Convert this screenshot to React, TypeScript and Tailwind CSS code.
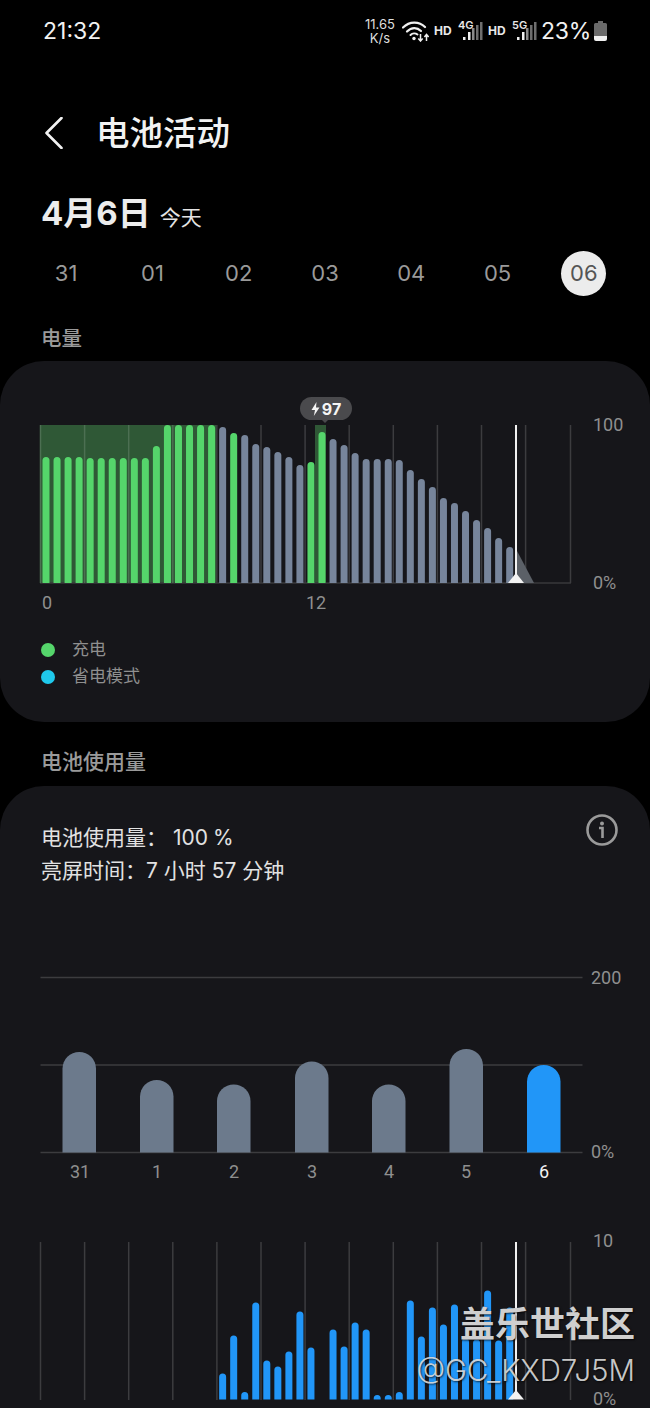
const BASE = 583;
const FIRST_X = 46;
const PITCH = 11.04;
const GRID_X = [40.5, 84.6, 128.7, 172.8, 216.9, 261, 305.1, 349.2, 393.3, 437.4, 481.5, 525.6, 570.5];

const level = [
  126, 126, 126, 126, 125, 125, 125, 125, 125, 125, 137, 158, 158, 158, 158, 158, 156, 150, 148, 139, 136, 131, 126,
  118, 121, 151, 144, 138, 130, 124, 124, 124, 123, 113, 104, 96, 85, 80, 72, 63, 55, 45, 36,
];
// which of the level bars were on charge
const charging = new Set([0, 1, 2, 3, 4, 5, 6, 7, 8, 9, 10, 11, 12, 13, 14, 15, 17, 24, 25]);

const usage: [number, number][] = [
  [16, 26], [17, 64], [18, 7.5], [19, 97], [20, 39], [21, 33], [22, 48], [23, 88], [24, 52],
  [26, 70], [27, 53], [28, 77], [29, 70], [30, 4.5], [31, 4.5], [32, 7.5], [33, 99], [34, 63],
  [35, 92], [36, 75], [37, 95], [38, 61], [39, 60], [40, 109], [41, 59], [42, 92],
];

const days = [
  { x: 62.5, top: 1052, label: "31", labelX: 80 },
  { x: 140, top: 1080, label: "1", labelX: 157 },
  { x: 217, top: 1084.5, label: "2", labelX: 234 },
  { x: 295, top: 1061.5, label: "3", labelX: 312 },
  { x: 372, top: 1084.5, label: "4", labelX: 389 },
  { x: 449.5, top: 1049, label: "5", labelX: 466 },
  { x: 527, top: 1065, label: "6", labelX: 544 },
];

const barPath = (x: number, top: number, base: number, w: number) => {
  const r = Math.min(w / 2, base - top);
  return `M${x} ${base}V${top + r}A${w / 2} ${r} 0 0 1 ${x + w} ${top + r}V${base}Z`;
};

const Signal = ({ label }: { label: string }) => (
  <div className="relative h-[24px] w-[27px]">
    <span className="absolute left-0 top-0 text-[11px] font-semibold leading-[12px] text-[#e8e8e8]">{label}</span>
    <svg width="27" height="24" viewBox="0 0 27 24" className="absolute -top-[2px] left-0">
      <rect x="5" y="20" width="2.5" height="3" fill="#f0f0f0" />
      <rect x="10" y="15" width="2.5" height="8" fill="#f0f0f0" />
      <rect x="14" y="11" width="2.5" height="12" fill="#8a8a8a" />
      <rect x="18" y="8" width="2.5" height="15" fill="#6e6e6e" />
      <rect x="22" y="5" width="2.5" height="18" fill="#6e6e6e" />
    </svg>
  </div>
);

const StatusBar = () => (
  <div className="flex h-[62px] items-center justify-between pl-[43px] pr-[43px] text-[#f2f2f2]">
    <span className="text-[23px] leading-none">21:32</span>
    <div className="flex items-center">
      <div className="flex w-[36px] flex-col items-center text-[13px] leading-[14px] text-[#dedede]">
        <span>11.65</span>
        <span>K/s</span>
      </div>
      <svg width="27" height="22" viewBox="0 0 27 22" fill="none" className="ml-[4px]">
        <path d="M1 7.5C7.5 1 17 1 23 7" stroke="#f0f0f0" strokeWidth="2.2" strokeLinecap="round" />
        <path d="M5 11.5C9.5 7 15 7 19 11" stroke="#f0f0f0" strokeWidth="2.2" strokeLinecap="round" />
        <path d="M8.5 15C10.5 13 13.5 13 15.5 14.5" stroke="#f0f0f0" strokeWidth="2" strokeLinecap="round" />
        <circle cx="12" cy="18.5" r="1.7" fill="#f0f0f0" />
        <path d="M18.5 14V21M16.3 18.5L18.5 21L20.7 18.5" stroke="#f0f0f0" strokeWidth="1.5" />
        <path d="M24.5 21V14.5M22.4 17L24.5 14.5L26.6 17" stroke="#f0f0f0" strokeWidth="1.5" />
      </svg>
      <span className="ml-[5px] w-[17px] text-[12px] font-bold text-[#e8e8e8]">HD</span>
      <div className="ml-[7px]">
        <Signal label="4G" />
      </div>
      <span className="ml-[3px] w-[17px] text-[12px] font-bold text-[#e8e8e8]">HD</span>
      <div className="ml-[7px]">
        <Signal label="5G" />
      </div>
      <span className="ml-[2px] w-[49px] text-[23px] leading-none tracking-[-0.3px]">23%</span>
      <svg width="13" height="20" viewBox="0 0 13 20" className="ml-[4px]">
        <path d="M4 0H9V2H11.5A1.5 1.5 0 0 1 13 3.5V15H0V3.5A1.5 1.5 0 0 1 1.5 2H4Z" fill="#6a6a6a" />
        <path d="M0 15H13V18A2 2 0 0 1 11 20H2A2 2 0 0 1 0 18Z" fill="#f0f0f0" />
      </svg>
    </div>
  </div>
);

const LevelChart = () => (
  <svg width="650" height="225" viewBox="0 390 650 225" className="block font-[family-name:Roboto,sans-serif]">
    <rect x="40" y="425" width="177" height="158" fill="#2f5836" />
    <rect x="315" y="425" width="11" height="158" fill="#2f5836" />
    <path d="M40 583H571" stroke="#38383b" strokeWidth="1.5" />
    {GRID_X.map((x) => (
      <path key={x} d={`M${x} 425V583`} stroke={x < 216 ? "#4c6f52" : "#3c3c3f"} strokeWidth="1.5" />
    ))}
    <path d="M516 549L534 583H516Z" fill="#5b6067" />
    {level.map((h, i) => (
      <path
        key={i}
        d={barPath(FIRST_X + i * PITCH - 3.5, BASE - h, BASE, 7)}
        fill={charging.has(i) ? "#55d56b" : "#77859b"}
      />
    ))}
    <path d="M516 425V583" stroke="#f2f2f2" strokeWidth="2" />
    <path d="M516 573L524 583H508Z" fill="#f2f2f2" />
    <text x="593" y="431" className="fill-[#8f8f8f] text-[18px]">100</text>
    <text x="593" y="588.5" className="fill-[#8f8f8f] text-[18px]">0%</text>
    <text x="42" y="609" className="fill-[#8f8f8f] text-[18px]">0</text>
    <text x="306" y="609" className="fill-[#8f8f8f] text-[18px]">12</text>
  </svg>
);

const DailyChart = () => (
  <svg width="650" height="230" viewBox="0 960 650 230" className="block font-[family-name:Roboto,sans-serif]">
    {[977.5, 1065, 1152.5].map((y) => (
      <path key={y} d={`M40.5 ${y}H582.5`} stroke="#3c3c3f" strokeWidth="1.5" />
    ))}
    {days.map((d) => (
      <g key={d.label}>
        <path
          d={`M${d.x} 1152.5V${d.top + 16.5}A16.75 16.5 0 0 1 ${d.x + 33.5} ${d.top + 16.5}V1152.5Z`}
          fill={d.label === "6" ? "#2196f8" : "#6c7a8c"}
        />
        <text
          x={d.labelX}
          y="1178"
          textAnchor="middle"
          className={d.label === "6" ? "fill-[#f2f2f2] text-[18px]" : "fill-[#8f8f8f] text-[18px]"}
        >
          {d.label}
        </text>
      </g>
    ))}
    <text x="591" y="983.5" className="fill-[#8f8f8f] text-[18px]">200</text>
    <text x="591" y="1157.5" className="fill-[#8f8f8f] text-[18px]">0%</text>
  </svg>
);

const UsageChart = () => (
  <svg width="650" height="178" viewBox="0 1230 650 178" className="block font-[family-name:Roboto,sans-serif]">
    {GRID_X.map((x) => (
      <path key={x} d={`M${x} 1242V1400`} stroke="#3c3c3f" strokeWidth="1.5" />
    ))}
    {usage.map(([i, h]) => (
      <path key={i} d={barPath(FIRST_X + i * PITCH - 3.5, 1399.5 - h, 1399.5, 7)} fill="#2196f8" />
    ))}
    <path d="M516 1242V1399" stroke="#f2f2f2" strokeWidth="2" />
    <path d="M516 1390L524 1399.5H508Z" fill="#f2f2f2" />
    <text x="593" y="1247" className="fill-[#8f8f8f] text-[18px]">10</text>
    <text x="593" y="1405" className="fill-[#8f8f8f] text-[18px]">0%</text>
  </svg>
);

export default function App() {
  return (
    <div className="relative h-[1408px] w-[650px] overflow-hidden bg-black font-[family-name:Inter,'Noto_Sans_CJK_SC',sans-serif]">
      <StatusBar />

      <div className="mt-[41px] flex h-[60px] items-center pl-[45px]">
        <svg width="18" height="32" viewBox="0 0 18 32" fill="none">
          <path d="M16.5 1L1.5 16L16.5 31" stroke="#f2f2f2" strokeWidth="2.6" strokeLinecap="round" strokeLinejoin="round" />
        </svg>
        <h1 className="ml-[33px] text-[33.5px] font-medium text-[#f2f2f2]">电池活动</h1>
      </div>

      <div className="mt-[25px] flex h-[50px] items-baseline pl-[41px] leading-[50px]">
        <span className="text-[33px] font-bold text-[#ececec]">4月6日</span>
        <span className="ml-[9px] text-[21px] text-[#e4e4e4]">今天</span>
      </div>

      <div className="mt-[12px] grid h-[46px] grid-cols-7 items-center px-[23px] text-center text-[22px] text-[#9a9a9a]">
        <span>31</span>
        <span>01</span>
        <span>02</span>
        <span>03</span>
        <span>04</span>
        <span>05</span>
        <span className="mx-auto flex h-[45px] w-[45px] items-center justify-center rounded-full bg-[#ececec] text-[#555555]">
          06
        </span>
      </div>

      <div className="mt-[28px] h-[30px] pl-[41px] text-[20.5px] font-medium leading-[30px] text-[#9a9a9a]">电量</div>

      <section className="relative mt-[7px] h-[361px] rounded-[44px] bg-[#16161a] pt-[29px]">
        <div className="absolute left-[300px] top-[36px] flex h-[23px] w-[52px] items-center justify-center gap-[2px] rounded-full bg-[#4a4a4d] text-[16px] font-bold text-[#f4f4f4]">
          <svg width="9" height="14" viewBox="0 0 9 14">
            <path d="M5.5 0L0.5 8H4L2.8 14L8.5 5.5H5Z" fill="#f4f4f4" />
          </svg>
          97
          <span className="absolute left-[21px] top-[22px] h-0 w-0 border-x-[4px] border-t-[4px] border-x-transparent border-t-[#4a4a4d]" />
        </div>
        <LevelChart />
        <div className="mt-[21px] flex flex-col pl-[41px] text-[17px] text-[#8f8f8f]">
          <div className="flex h-[27px] items-center gap-[17px]">
            <span className="h-[14px] w-[14px] rounded-full bg-[#55d56b]" />
            充电
          </div>
          <div className="flex h-[27px] items-center gap-[17px]">
            <span className="h-[14px] w-[14px] rounded-full bg-[#1fc9ec]" />
            省电模式
          </div>
        </div>
      </section>

      <div className="mt-[25px] h-[30px] pl-[41px] text-[21px] font-medium leading-[30px] text-[#9a9a9a]">电池使用量</div>

      <section className="mt-[9px] h-[640px] rounded-t-[44px] bg-[#16161a] pt-[35px]">
        <div className="flex items-start justify-between pl-[41px] pr-[32px]">
          <div className="text-[21px] leading-[33px] text-[#e2e2e2]">
            <p>
              电池使用量： 100<span className="ml-[5px]">%</span>
            </p>
            <p>亮屏时间：7 小时 57 分钟</p>
          </div>
          <svg width="32" height="32" viewBox="0 0 32 32" fill="none" className="-mt-[7px]">
            <circle cx="16" cy="16" r="14.5" stroke="#9a9a9a" strokeWidth="2.6" />
            <circle cx="16" cy="9.5" r="2" fill="#9a9a9a" />
            <path d="M13 14H16.5V24" stroke="#9a9a9a" strokeWidth="2.6" />
          </svg>
        </div>
        <div className="mt-[73px]">
          <DailyChart />
        </div>
        <div className="mt-[40px]">
          <UsageChart />
        </div>
      </section>

      <div className="absolute right-[15px] top-[1301px] flex flex-col items-end text-[#cfcfcf] [text-shadow:1px_1px_2px_rgba(0,0,0,0.7)]">
        <span className="text-[35px] font-bold leading-[46px]">盖乐世社区</span>
        <span className="mt-[2px] text-[29.4px] font-light leading-[44px] text-[#e0e0e0]/90">@GC_KXD7J5M</span>
      </div>
    </div>
  );
}
